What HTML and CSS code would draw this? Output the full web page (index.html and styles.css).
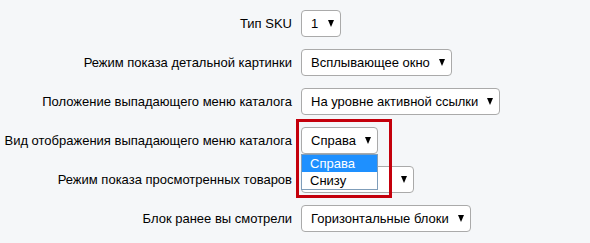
FILE: index.html
```html
<!DOCTYPE html>
<html lang="ru">

<head>
  <meta charset="UTF-8">
  <title>Настройки</title>
  <link rel="stylesheet" href="styles.css">
</head>

<body>
  <div class="form">
    <div class="row">
      <div class="label">Тип SKU</div>
      <div class="select">1<span class="arrow"></span></div>
    </div>
    <div class="row">
      <div class="label">Режим показа детальной картинки</div>
      <div class="select">Всплывающее окно<span class="arrow"></span></div>
    </div>
    <div class="row">
      <div class="label">Положение выпадающего меню каталога</div>
      <div class="select">На уровне активной ссылки<span class="arrow"></span></div>
    </div>
    <div class="row">
      <div class="label">Вид отображения выпадающего меню каталога</div>
      <div class="select open">Справа<span class="arrow"></span>
        <div class="list">
          <div class="opt active">Справа</div>
          <div class="opt">Снизу</div>
        </div>
        <div class="mark"></div>
      </div>
    </div>
    <div class="row">
      <div class="label">Режим показа просмотренных товаров</div>
      <div class="select wide"><span class="arrow"></span></div>
    </div>
    <div class="row">
      <div class="label">Блок ранее вы смотрели</div>
      <div class="select">Горизонтальные блоки<span class="arrow"></span></div>
    </div>
  </div>
</body>

</html>
```

FILE: styles.css
```css
body {
  margin: 0;
  background: #f5f7f9;
  font-family: "Liberation Sans", Arial, sans-serif;
  font-size: 13px;
  color: #000;
}

.form {
  padding-top: 10px;
}

.row {
  display: flex;
  align-items: center;
  gap: 9px;
  height: 27px;
  margin-bottom: 12px;
}

.label {
  width: 292px;
  text-align: right;
}

.select {
  position: relative;
  display: inline-flex;
  align-items: center;
  justify-content: space-between;
  box-sizing: border-box;
  min-width: 40px;
  height: 27px;
  padding: 0 6px 0 9px;
  background: #fff;
  border: 1px solid #aaa;
  border-radius: 4px;
}

.select.wide {
  width: 113px;
  justify-content: flex-end;
}

.arrow {
  display: inline-block;
  margin-left: 9px;
  width: 0;
  height: 0;
  border-left: 3.5px solid transparent;
  border-right: 3.5px solid transparent;
  border-top: 7px solid #000;
}

.list {
  position: absolute;
  top: 26px;
  left: -1px;
  right: -1px;
  background: #fff;
  border: 1px solid #7f9db9;
  z-index: 2;
}

.opt {
  height: 17px;
  line-height: 17px;
  padding-left: 8px;
}

.opt.active {
  background: #1e90ff;
  color: #fff;
}

.mark {
  position: absolute;
  left: -6px;
  top: -9px;
  width: 90px;
  height: 73px;
  border: 3px solid #c4000c;
  z-index: 3;
}
```
